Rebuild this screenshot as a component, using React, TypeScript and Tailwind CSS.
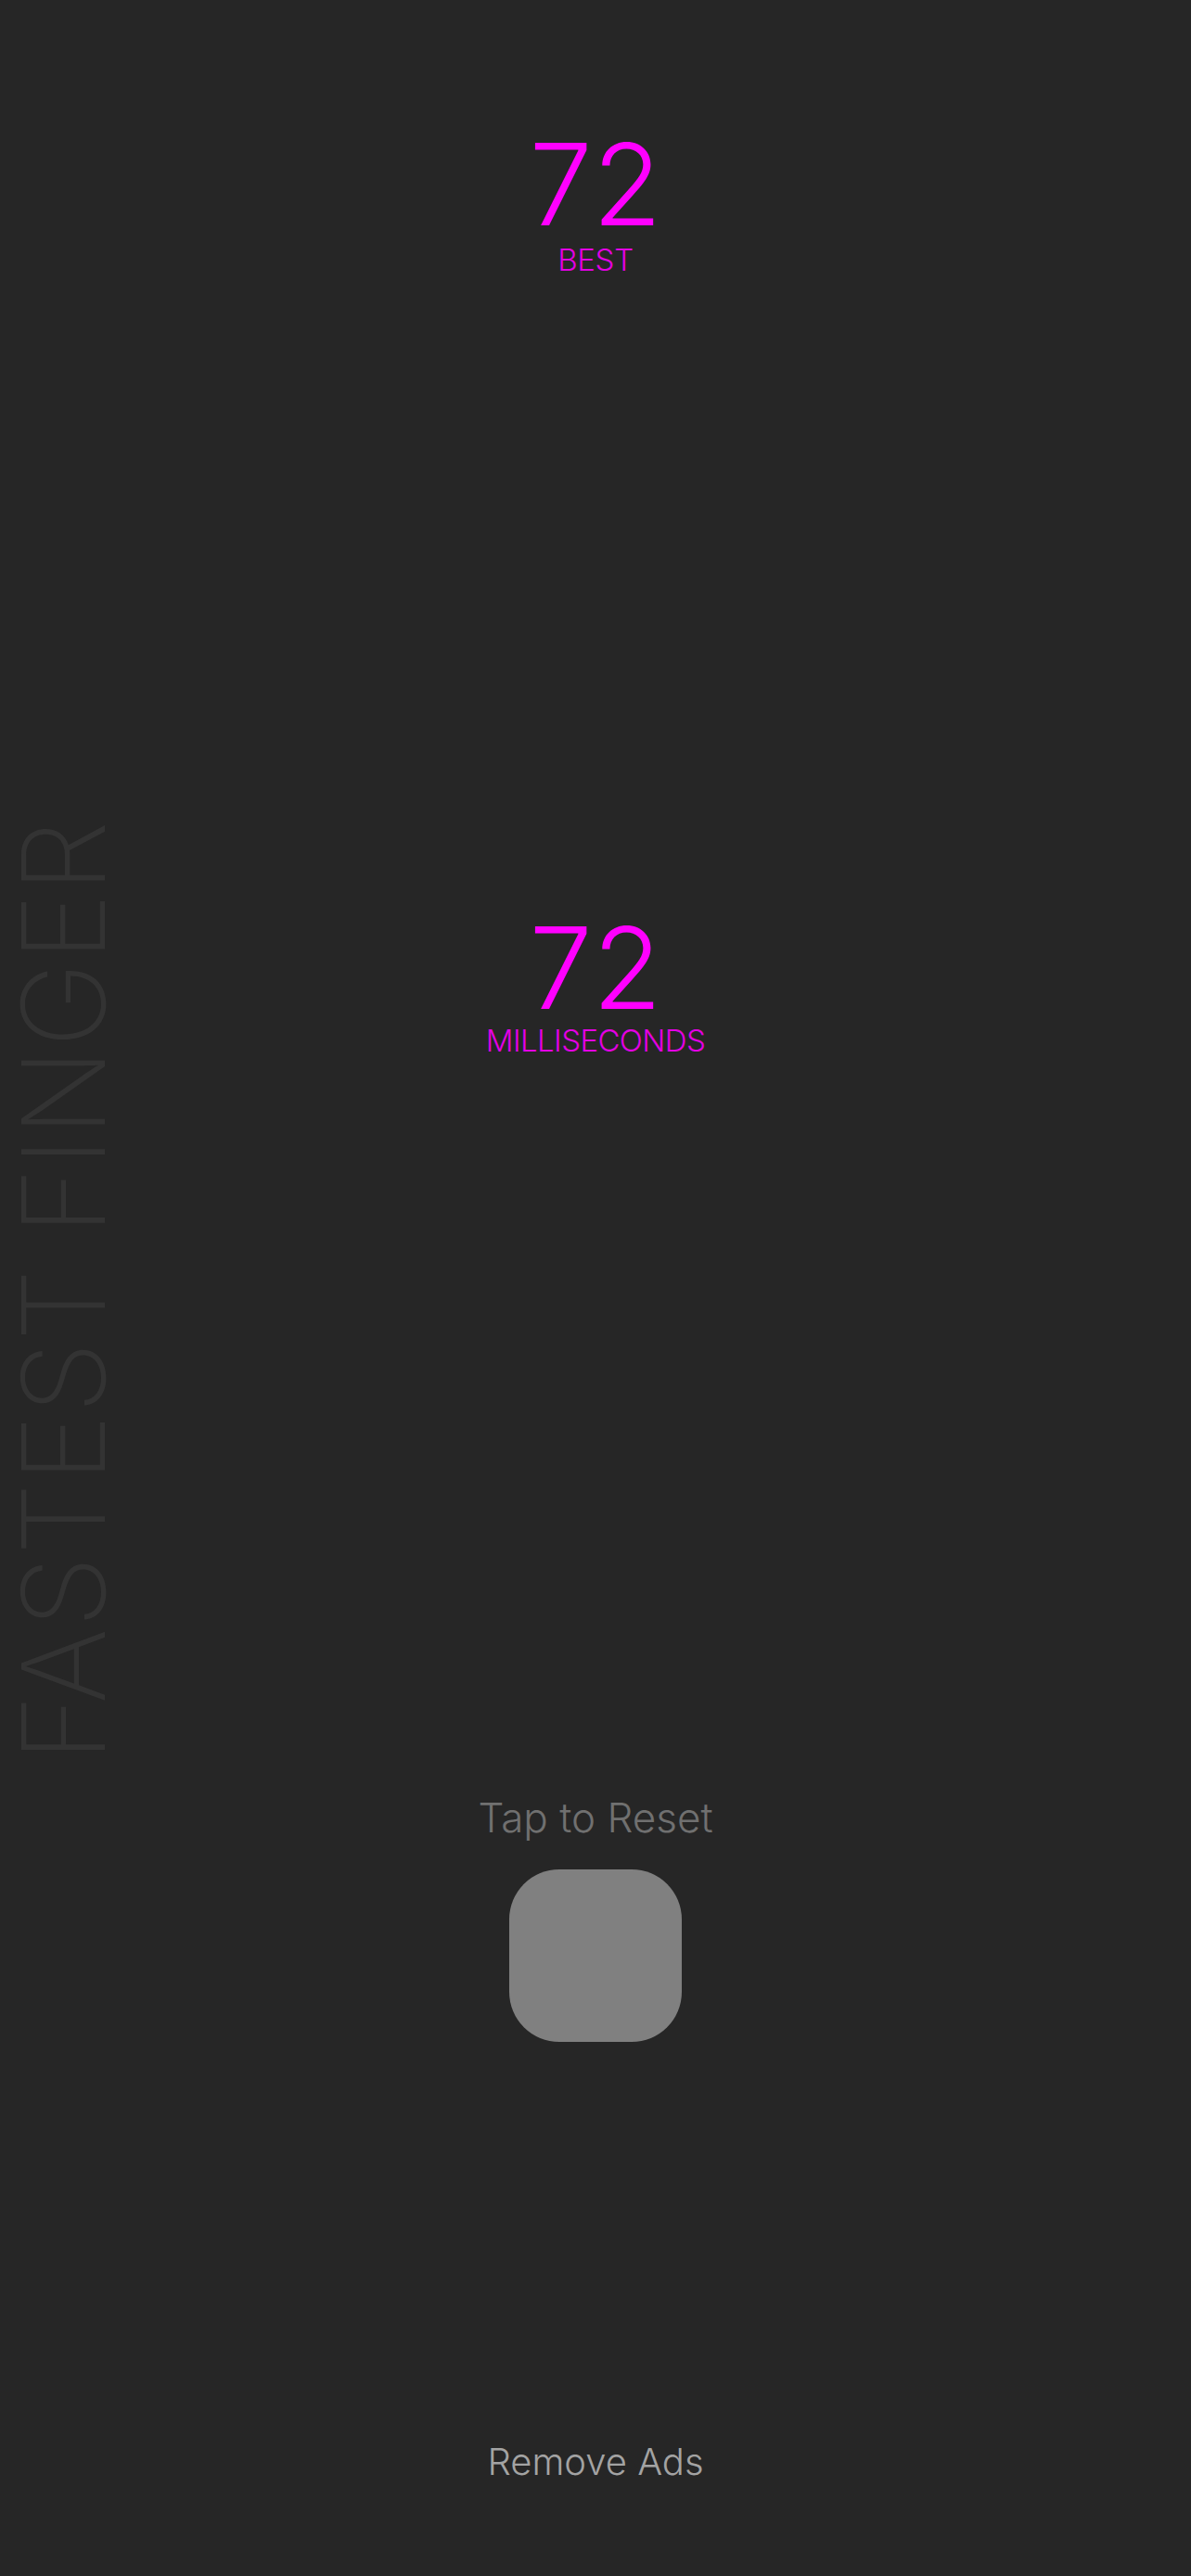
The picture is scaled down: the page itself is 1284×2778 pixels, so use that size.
export default function App() {
  return (
    <div className="grid min-h-screen bg-[#262626] font-['Inter','Liberation_Sans',sans-serif]">
      {/* side watermark */}
      <div className="col-start-1 row-start-1 self-start ml-[6px] mt-[884px] rotate-180 [writing-mode:vertical-rl] text-[124px] font-extralight leading-none tracking-[1px] text-[#333333] select-none">
        FASTEST FINGER
      </div>

      <main className="col-start-1 row-start-1 flex flex-col items-center">
        {/* best score */}
        <div className="mt-[138px] flex flex-col items-center text-[#ff00ff]">
          <span className="text-[122px] font-light leading-none">72</span>
          <span className="mt-[4px] text-[33px] font-light leading-none tracking-[-0.3px] text-[#e400e4]">BEST</span>
        </div>

        {/* last score */}
        <div className="mt-[686px] flex flex-col items-center text-[#ff00ff]">
          <span className="text-[122px] font-light leading-none">72</span>
          <span className="mt-[1px] text-[33px] font-light leading-none tracking-[-0.6px] text-[#e400e4]">MILLISECONDS</span>
        </div>

        <p className="mt-[799px] text-[44px] font-light leading-none text-[#707070]">Tap to Reset</p>

        <button className="mt-[34px] h-[186px] w-[186px] rounded-[54px] bg-[#808080]" aria-label="Reset" />

        <button className="mt-[433px] text-[40px] font-light leading-none text-[#a3a3a3]">Remove Ads</button>
      </main>
    </div>
  );
}
